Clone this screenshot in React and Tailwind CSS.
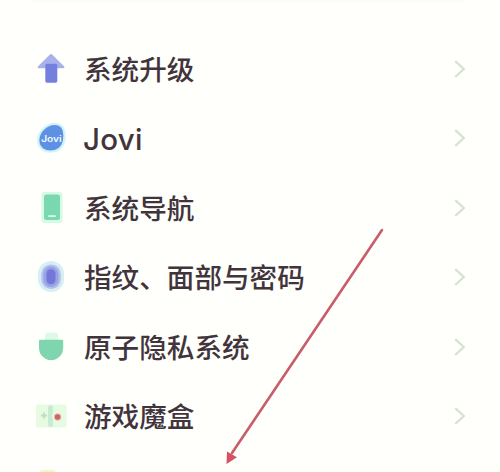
import React from 'react';

const UpgradeIcon = () => (
  <svg width="32" height="32" viewBox="0 0 32 32">
    <path d="M14.7 1.8a1.8 1.8 0 0 1 2.7 0L29.2 13.6q1 1.7-.8 1.7H3.7q-1.8 0-.8-1.7Z" fill="#a6b2e9" />
    <rect x="10.3" y="10.7" width="12" height="19" rx="1.8" fill="#747fdf" />
  </svg>
);

const JoviIcon = () => (
  <svg width="32" height="32" viewBox="0 0 32 32">
    <path
      d="M19.5 1.9C27 1.9 29.5 7 29.5 13.5C29.5 22 26.5 27.5 19.5 29.2C9.5 31 3.3 26 3.3 18C3.3 9.5 12 1.9 19.5 1.9Z"
      fill="#5e91e3"
      stroke="#cff3f7"
      strokeWidth="2.2"
    />
    <text
      x="16.4"
      y="19.6"
      textAnchor="middle"
      textLength="20.5"
      lengthAdjust="spacingAndGlyphs"
      className="fill-[#f0fbff] font-['Inter',sans-serif] text-[8.5px] font-semibold"
    >
      Jovi
    </text>
  </svg>
);

const NavigationIcon = () => (
  <svg width="32" height="32" viewBox="0 0 32 32">
    <rect x="6.5" y="0" width="21" height="31" rx="3" fill="#d5fbe4" />
    <rect x="9" y="2.5" width="16" height="25.5" rx="2.5" fill="#79d8b0" />
    <rect x="13" y="23.3" width="8" height="1.7" rx=".8" fill="#d9fbe8" />
  </svg>
);

const FingerprintIcon = () => (
  <svg width="32" height="32" viewBox="0 0 32 32">
    <rect x="3" y="0" width="26" height="31" rx="13" fill="#d5eff3" />
    <rect x="6.3" y="3.5" width="19.5" height="24.5" rx="9.7" fill="#b4bfee" />
    <rect x="8.5" y="5.5" width="15" height="20.5" rx="7.5" fill="#98a2e6" />
    <rect x="11.5" y="8.2" width="9" height="15" rx="4.5" fill="#7378d8" />
  </svg>
);

const PrivacyIcon = () => (
  <svg width="32" height="32" viewBox="0 0 32 32">
    <rect x="10" y="1.5" width="13" height="12" rx="2.5" fill="#dcfae6" />
    <path d="M5.2 8.7h21.8q1.2 0 1.2 1.2v6.8a12.1 12.5 0 0 1-24.2 0v-6.8q0-1.2 1.2-1.2Z" fill="#7fd6ae" />
  </svg>
);

const GameIcon = () => (
  <svg width="32" height="32" viewBox="0 0 32 32">
    <rect x="1" y="4.5" width="30.5" height="23" rx="2.5" fill="#e6fbe1" />
    <path d="M14.5 5.5h3.5v7q-2 3.5 0 7v7.3h-3.5q-1.5 0-1.5-2v-17.3q0-2 1.5-2Z" fill="#c8ecd2" />
    <path d="M8.9 12.5v6M5.9 15.5h6" stroke="#bfdcc9" strokeWidth="2" />
    <circle cx="22.6" cy="17" r="3.7" fill="#edbeb7" />
    <circle cx="22.6" cy="17" r="2.8" fill="#cc6563" />
  </svg>
);

const menuItems = [
  { label: '系统升级', icon: UpgradeIcon },
  { label: 'Jovi', icon: JoviIcon, labelClass: 'text-[29.5px] tracking-[0.3px] -ml-px' },
  { label: '系统导航', icon: NavigationIcon },
  { label: '指纹、面部与密码', icon: FingerprintIcon },
  { label: '原子隐私系统', icon: PrivacyIcon },
  { label: '游戏魔盒', icon: GameIcon },
];

const MenuRow = ({ item }) => {
  const Icon = item.icon;
  return (
    <li className="flex h-[69.5px] shrink-0 items-center pl-[35px] pr-[34px]">
      <Icon />
      <div className="ml-[17px] flex-1 whitespace-nowrap pt-[2px] text-[27.6px] leading-[40px] font-medium text-[#42343d]">
        <span className={item.labelClass}>{item.label}</span>
      </div>
      <svg width="12" height="18" viewBox="0 0 12 18" fill="none">
        <path d="M1.2 1.2 9.8 9l-8.6 8" stroke="#d5e3d0" strokeWidth="2.3" />
      </svg>
    </li>
  );
};

const App = () => {
  return (
    <div className="relative flex h-[472px] w-[500px] flex-col overflow-hidden bg-[#fffffb] font-['Inter','Noto_Sans_CJK_SC',sans-serif]">
      {/* Bottom edge of the previous group */}
      <div className="ml-8 mr-9 h-[3px] shrink-0 bg-[#fcfdf7]" />

      <ul className="flex flex-col pt-[31px]">
        {menuItems.map((item) => (
          <MenuRow key={item.label} item={item} />
        ))}
      </ul>

      {/* Icon of the next entry, cut off by the fold */}
      <div className="mt-[19px] ml-[39px] h-6 w-[17px] shrink-0 rounded-t-sm bg-[#f8f6b4]" />

      {/* Pointer arrow */}
      <svg className="absolute inset-0" width="500" height="472" viewBox="0 0 500 472">
        <path d="M382 230 232 453" stroke="#c95d69" strokeWidth="2.6" strokeLinecap="round" />
        <path d="M226.5 464 227 451.5 237 457.2Z" fill="#d65261" />
      </svg>
    </div>
  );
};

export default App;
